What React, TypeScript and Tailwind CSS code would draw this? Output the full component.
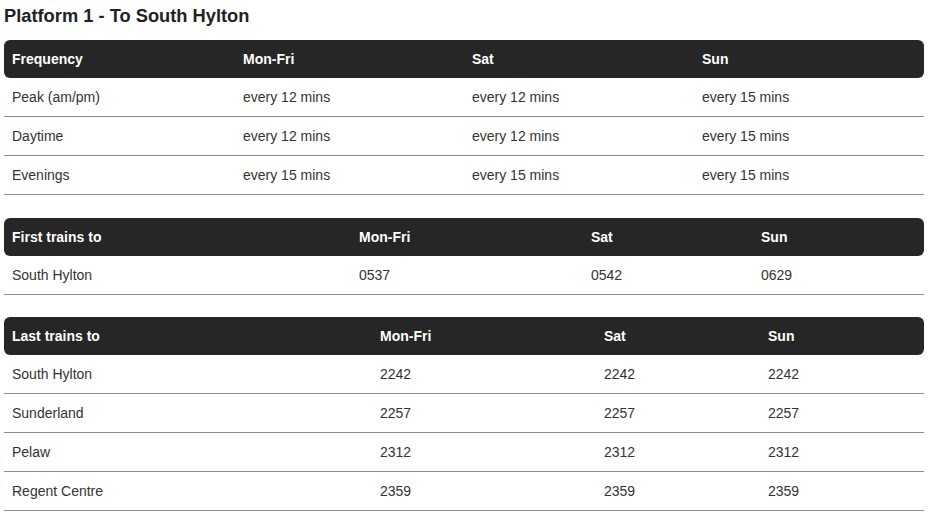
const font = { fontFamily: '"Liberation Sans", Arial, sans-serif' }

type Table = {
  cols: string
  gap: string
  head: string[]
  rows: string[][]
}

const tables: Table[] = [
  {
    cols: 'grid-cols-[231px_229px_230px_230px]',
    gap: 'mb-[23px]',
    head: ['Frequency', 'Mon-Fri', 'Sat', 'Sun'],
    rows: [
      ['Peak (am/pm)', 'every 12 mins', 'every 12 mins', 'every 15 mins'],
      ['Daytime', 'every 12 mins', 'every 12 mins', 'every 15 mins'],
      ['Evenings', 'every 15 mins', 'every 15 mins', 'every 15 mins'],
    ],
  },
  {
    cols: 'grid-cols-[347px_232px_170px_171px]',
    gap: 'mb-[22px]',
    head: ['First trains to', 'Mon-Fri', 'Sat', 'Sun'],
    rows: [['South Hylton', '0537', '0542', '0629']],
  },
  {
    cols: 'grid-cols-[368px_224px_164px_164px]',
    gap: 'mb-[22px]',
    head: ['Last trains to', 'Mon-Fri', 'Sat', 'Sun'],
    rows: [
      ['South Hylton', '2242', '2242', '2242'],
      ['Sunderland', '2257', '2257', '2257'],
      ['Pelaw', '2312', '2312', '2312'],
      ['Regent Centre', '2359', '2359', '2359'],
    ],
  },
]

function TimeTable({ t }: { t: Table }) {
  return (
    <div className={`w-[920px] ${t.gap}`}>
      <div className={`grid ${t.cols} h-[38px] items-center bg-[#262626] rounded-[6px] text-white font-bold`}>
        {t.head.map((h) => (
          <div key={h} className="px-2">{h}</div>
        ))}
      </div>
      {t.rows.map((r) => (
        <div key={r[0]} className={`grid ${t.cols} h-[39px] items-center border-b border-[#8c8c8c] text-[#333]`}>
          {r.map((c, i) => (
            <div key={i} className="px-2">{c}</div>
          ))}
        </div>
      ))}
    </div>
  )
}

export default function App() {
  return (
    <div className="bg-white w-[930px] h-[519px] overflow-hidden pl-1 text-[14px]" style={font}>
      <h1 className="text-[18.3px] font-bold text-[#222] h-[40px] pt-[5px] leading-[22px]">Platform 1 - To South Hylton</h1>
      {tables.map((t) => (
        <TimeTable key={t.head[0]} t={t} />
      ))}
    </div>
  )
}
